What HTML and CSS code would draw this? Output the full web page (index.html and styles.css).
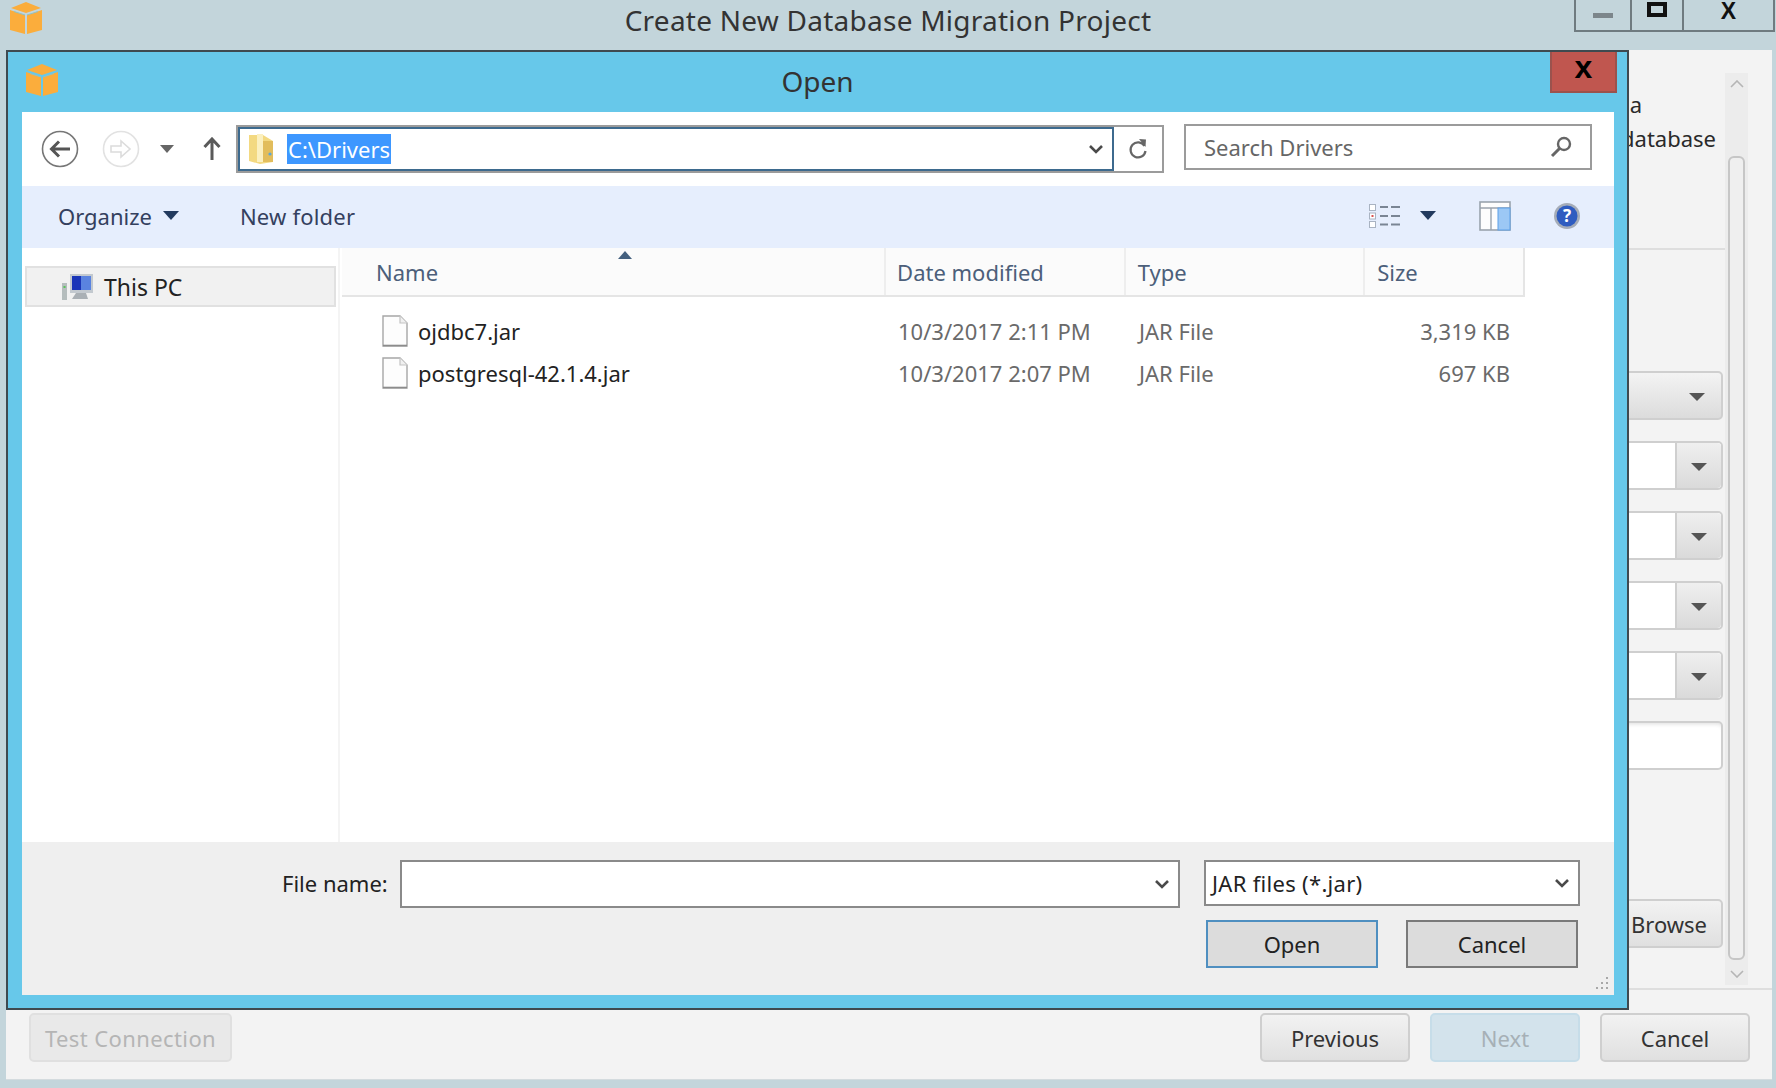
FILE: index.html
```html
<!DOCTYPE html>
<html lang="en">
<head>
    <meta charset="UTF-8">
    <meta name="viewport" content="width=device-width, initial-scale=1.0">
    <title>Create New Database Migration Project</title>
    <link rel="stylesheet" href="styles.css">
</head>
<body>
    <svg class="defs" width="0" height="0">
        <symbol id="box" viewBox="0 0 32 32">
            <path d="M16 0 L31 6 L16 11 L1 6 Z" fill="#fbad3c"/>
            <path d="M0 8 L15 13 V32 L0 28 Z" fill="#fbad3c"/>
            <path d="M32 8 L17 13 V32 L32 28 Z" fill="#fbad3c"/>
            <path d="M4 9.5 L15 13 M28 9.5 L17 13" stroke="#8fc3c8" stroke-width="1"/>
        </symbol>
        <symbol id="file" viewBox="0 0 26 32">
            <path d="M1 1 H18 L25 8 V31 H1 Z" fill="#fdfdfd" stroke="#a6a6a6" stroke-width="1.4"/>
            <path d="M18 1 V8 H25" fill="#f0f0f0" stroke="#c4c4c4" stroke-width="1.2"/>
            <path d="M1 30.5 H25" stroke="#8c8c8c" stroke-width="1.6"/>
        </symbol>
        <symbol id="combo-caret" viewBox="0 0 16 10">
            <path d="M2 2 L8 8 L14 2" fill="none" stroke="#4a4a4a" stroke-width="2.6"/>
        </symbol>
    </svg>

    <div class="window">
        <header class="titlebar">
            <svg class="app-icon"><use href="#box"/></svg>
            <div class="title">Create New Database Migration Project</div>
            <div class="win-buttons">
                <div class="win-btn win-min"><span class="min-glyph"></span></div>
                <div class="win-btn win-max"><span class="max-glyph"></span></div>
                <div class="win-btn win-close">X</div>
            </div>
        </header>

        <div class="client">
            <div class="wizard-body">
                <div class="form">
                    <div class="intro">
                        <div class="intro-a">a</div>
                        <div>database</div>
                    </div>
                    <div class="fields">
                        <div class="combo combo-full"><span class="combo-arrow"></span></div>
                        <div class="combo"><span class="combo-arrow"></span></div>
                        <div class="combo"><span class="combo-arrow"></span></div>
                        <div class="combo"><span class="combo-arrow"></span></div>
                        <div class="combo"><span class="combo-arrow"></span></div>
                        <div class="combo combo-input"></div>
                    </div>
                    <div class="browse-row">
                        <button class="btn btn-browse">Browse</button>
                    </div>
                </div>
                <div class="scrollbar">
                    <svg class="scroll-arrow" viewBox="0 0 14 8"><path d="M1 7 L7 1 L13 7" fill="none" stroke="#b5b5b5" stroke-width="1.6"/></svg>
                    <div class="scroll-thumb"></div>
                    <svg class="scroll-arrow" viewBox="0 0 14 8"><path d="M1 1 L7 7 L13 1" fill="none" stroke="#b5b5b5" stroke-width="1.6"/></svg>
                </div>
            </div>
            <footer class="wizard-footer">
                <button class="btn btn-disabled">Test Connection</button>
                <div class="footer-right">
                    <button class="btn">Previous</button>
                    <button class="btn btn-next">Next</button>
                    <button class="btn">Cancel</button>
                </div>
            </footer>
        </div>

        <!-- file dialog sits over the wizard -->
        <div class="dialog">
            <div class="dialog-title">
                <svg class="dialog-icon"><use href="#box"/></svg>
                <div class="dialog-name">Open</div>
                <div class="dialog-close">x</div>
            </div>
            <div class="dialog-inner">
                <div class="navbar">
                    <svg class="nav-circle" viewBox="0 0 38 38">
                        <circle cx="19" cy="19" r="17.5" fill="#fff" stroke="#777" stroke-width="1.6"/>
                        <path d="M29 19 H11 M18 11.5 L10.5 19 L18 26.5" fill="none" stroke="#555" stroke-width="3"/>
                    </svg>
                    <svg class="nav-circle nav-forward" viewBox="0 0 38 38">
                        <circle cx="19" cy="19" r="17.5" fill="#fff" stroke="#e2e2e2" stroke-width="1.6"/>
                        <path d="M9 16 H19 V11 L28 19 L19 27 V22 H9 Z" fill="none" stroke="#dcdcdc" stroke-width="1.6"/>
                    </svg>
                    <span class="nav-down"></span>
                    <svg class="nav-up" viewBox="0 0 18 24">
                        <path d="M9 23 V3 M1.5 10 L9 2 L16.5 10" fill="none" stroke="#5a5a5a" stroke-width="3"/>
                    </svg>
                    <div class="address">
                        <div class="address-field">
                            <svg class="folder" viewBox="0 0 26 32">
                                <path d="M1 2 H15 L25 8 V29 L12 31 L1 28 Z" fill="#f3d981"/>
                                <path d="M9 1 H15 V29 H9 Z" fill="#fbf0c0"/>
                                <path d="M15 8 H25 V29 H15 Z" fill="#e2bd5c"/>
                                <circle cx="22" cy="21" r="1.6" fill="#5aa7d8"/>
                            </svg>
                            <span class="address-text">C:\Drivers</span>
                            <svg class="caret"><use href="#combo-caret"/></svg>
                        </div>
                        <div class="address-refresh">
                            <svg class="refresh" viewBox="0 0 20 22">
                                <path d="M16.5 8 A7.5 7.5 0 1 0 17.5 13" fill="none" stroke="#666" stroke-width="2.2"/>
                                <path d="M11 1 L18 1.5 L17.5 9 Z" fill="#666"/>
                            </svg>
                        </div>
                    </div>
                    <div class="search">
                        <span class="search-text">Search Drivers</span>
                        <svg class="search-icon" viewBox="0 0 22 22">
                            <circle cx="14" cy="8" r="6" fill="none" stroke="#666" stroke-width="2.4"/>
                            <path d="M9.5 12.5 L2 20" stroke="#666" stroke-width="3"/>
                        </svg>
                    </div>
                </div>

                <div class="toolbar">
                    <span class="tool-item">Organize<span class="tool-arrow"></span></span>
                    <span class="tool-item tool-new">New folder</span>
                    <div class="tool-right">
                        <svg class="view-icon" viewBox="0 0 31 24">
                            <g fill="#fff" stroke="#a9b3c2" stroke-width="1">
                                <rect x="0.5" y="0.5" width="6" height="6"/>
                                <rect x="0.5" y="9" width="6" height="6"/>
                                <rect x="0.5" y="17.5" width="6" height="6"/>
                            </g>
                            <rect x="2.5" y="11" width="2" height="2" fill="#d9534f"/>
                            <path d="M11 3 H19 M22 3 H31 M11 12 H19 M22 12 H31 M11 20.5 H19 M22 20.5 H31" stroke="#7a8594" stroke-width="2"/>
                        </svg>
                        <span class="tool-arrow view-arrow"></span>
                        <svg class="pane-icon" viewBox="0 0 32 30">
                            <rect x="1" y="1" width="30" height="28" fill="#fdfdfd" stroke="#9aa3ad" stroke-width="1.6"/>
                            <path d="M1 7 H31 M12 7 V29" stroke="#9aa3ad" stroke-width="1.4"/>
                            <rect x="19" y="7" width="12" height="22" fill="#9cc8f5" stroke="#5da0e8" stroke-width="1"/>
                        </svg>
                        <svg class="help-icon" viewBox="0 0 28 28">
                            <circle cx="14" cy="14" r="13" fill="#a5acb8"/>
                            <circle cx="14" cy="14" r="10.5" fill="#2f5cc0"/>
                            <text x="14" y="20" text-anchor="middle" class="help-mark">?</text>
                        </svg>
                    </div>
                </div>

                <div class="browser">
                    <nav class="tree">
                        <div class="tree-item">
                            <svg class="pc-icon" viewBox="0 0 32 28">
                                <rect x="0" y="10" width="5" height="17" fill="#b5bdbd"/>
                                <rect x="1.5" y="13" width="2" height="2" fill="#58c45a"/>
                                <rect x="8" y="1" width="23" height="19" fill="#c3c9cf"/>
                                <rect x="10" y="3" width="19" height="14" fill="#1a35b8"/>
                                <rect x="19" y="3" width="10" height="14" fill="#5a83e0"/>
                                <path d="M14 20 H24 L26 26 H10 Z" fill="#aab0b5"/>
                            </svg>
                            <span>This PC</span>
                        </div>
                    </nav>
                    <div class="list">
                        <div class="list-head">
                            <span class="sort-arrow"></span>
                            <div class="col-name">Name</div>
                            <div class="col-date">Date modified</div>
                            <div class="col-type">Type</div>
                            <div class="col-size">Size</div>
                        </div>
                        <div class="rows">
                            <div class="row">
                                <div class="col-name cell-name"><svg class="file-icon"><use href="#file"/></svg>ojdbc7.jar</div>
                                <div class="col-date cell-muted">10/3/2017 2:11 PM</div>
                                <div class="col-type cell-muted">JAR File</div>
                                <div class="col-size cell-muted cell-right">3,319 KB</div>
                            </div>
                            <div class="row">
                                <div class="col-name cell-name"><svg class="file-icon"><use href="#file"/></svg>postgresql-42.1.4.jar</div>
                                <div class="col-date cell-muted">10/3/2017 2:07 PM</div>
                                <div class="col-type cell-muted">JAR File</div>
                                <div class="col-size cell-muted cell-right">697 KB</div>
                            </div>
                        </div>
                    </div>
                </div>

                <div class="dialog-bottom">
                    <div class="name-row">
                        <label class="name-label">File name:</label>
                        <div class="name-input"><svg class="caret"><use href="#combo-caret"/></svg></div>
                        <div class="type-select">JAR files (*.jar)<svg class="caret"><use href="#combo-caret"/></svg></div>
                    </div>
                    <div class="action-row">
                        <button class="win-action win-action-default">Open</button>
                        <button class="win-action">Cancel</button>
                    </div>
                    <svg class="grip" viewBox="0 0 16 16">
                        <g fill="#a8a8a8">
                            <rect x="13" y="1" width="2" height="2"/>
                            <rect x="13" y="6" width="2" height="2"/><rect x="8" y="6" width="2" height="2"/>
                            <rect x="13" y="11" width="2" height="2"/><rect x="8" y="11" width="2" height="2"/><rect x="3" y="11" width="2" height="2"/>
                        </g>
                    </svg>
                </div>
            </div>
        </div>
    </div>
</body>
</html>
```

FILE: styles.css
```css
* {
    box-sizing: border-box;
}
body {
    margin: 0;
    font-family: "Noto Sans", "Open Sans", sans-serif;
    font-size: 22px;
    color: #2a2a2a;
    background: #c3d5db;
    overflow: hidden;
}
button {
    font-family: inherit;
    font-size: 22px;
}
.defs {
    position: absolute;
}
.window {
    position: relative;
    width: 1776px;
    height: 1088px;
    display: flex;
    flex-direction: column;
}

/* main window title */
.titlebar {
    height: 50px;
    display: grid;
    grid-template-columns: 1fr auto 1fr;
}
.app-icon {
    width: 32px;
    height: 32px;
    margin: 2px 0 0 10px;
}
.title {
    font-size: 28px;
    letter-spacing: 0.25px;
    line-height: 40px;
    color: #333;
}
.win-buttons {
    justify-self: end;
    display: flex;
    height: 32px;
    margin-right: 1px;
    border: 2px solid #6f7b80;
    border-top: none;
}
.win-btn {
    display: flex;
    justify-content: center;
}
.win-min {
    width: 56px;
    border-right: 2px solid #6f7b80;
}
.win-max {
    width: 52px;
    border-right: 2px solid #6f7b80;
}
.win-close {
    width: 89px;
    font-weight: 700;
    font-size: 23px;
    line-height: 22px;
    color: #111;
    font-family: "Liberation Sans", sans-serif;
}
.min-glyph {
    width: 20px;
    height: 5px;
    margin-top: 13px;
    background: #7c868b;
}
.max-glyph {
    width: 20px;
    height: 15px;
    margin-top: 2px;
    border: 4px solid #111;
}

/* wizard behind the dialog */
.client {
    flex: 1;
    margin: 0 4px 8px 6px;
    background: #f3f3f3;
    display: flex;
    flex-direction: column;
    border-bottom: 1px solid #d4dbde;
}
.wizard-body {
    height: 940px;
    display: flex;
    border-bottom: 2px solid #dedede;
}
.form {
    flex: 1;
    display: flex;
    flex-direction: column;
    align-items: flex-end;
}
.intro {
    width: 100%;
    height: 200px;
    padding-top: 37px;
    display: flex;
    flex-direction: column;
    align-items: flex-end;
    padding-right: 9px;
    line-height: 34px;
    border-bottom: 2px solid #dedede;
}
.intro-a {
    margin-right: 74px;
}
.fields {
    margin-top: 121px;
    width: 400px;
    display: flex;
    flex-direction: column;
    gap: 21px;
    margin-right: 2px;
}
.combo {
    height: 49px;
    background: #fff;
    border: 2px solid #cfcfcf;
    border-radius: 5px;
    display: flex;
    justify-content: flex-end;
}
.combo-full {
    background: linear-gradient(#f3f3f3, #dcdcdc);
}
.combo-full .combo-arrow {
    background: none;
    border-left: none;
}
.combo-input {
    box-shadow: inset 0 4px 4px -3px #ddd;
}
.combo-arrow {
    width: 46px;
    background: linear-gradient(#efefef, #dadada);
    border-left: 2px solid #cfcfcf;
    border-radius: 0 4px 4px 0;
    position: relative;
}
.combo-arrow::after {
    content: "";
    position: absolute;
    left: 14px;
    top: 20px;
    border: 8px solid transparent;
    border-top: 8px solid #555;
    border-bottom: none;
}
.browse-row {
    margin-top: 129px;
    margin-right: 2px;
}
.btn {
    height: 49px;
    min-width: 150px;
    padding: 0 20px;
    color: #333;
    background: linear-gradient(#f2f2f2, #e0e0e0);
    border: 2px solid #cfcfcf;
    border-radius: 5px;
}
.btn-browse {
    width: 200px;
    height: 49px;
    padding: 0 14px 0 0;
    text-align: right;
}
.btn-next {
    background: #d3e3ec;
    border-color: #c6dde9;
    color: #a6b0b6;
}
.btn-disabled {
    width: 203px;
    padding: 0;
    letter-spacing: 0.4px;
    background: #e9e9e9;
    border-color: #e0e0e0;
    color: #b5b5b5;
}
.scrollbar {
    width: 23px;
    margin: 23px 24px 3px 0;
    background: #ececec;
    display: flex;
    flex-direction: column;
    align-items: center;
    gap: 0;
}
.scroll-arrow {
    width: 14px;
    height: 8px;
    margin: 7px 0;
    flex: none;
}
.scroll-thumb {
    flex: 1;
    width: 17px;
    margin: 61px 0 3px;
    border: 2px solid #c6c6c6;
    border-radius: 6px;
    background: #efefef;
}
.wizard-footer {
    flex: 1;
    display: flex;
    justify-content: space-between;
    padding: 23px 22px 0 23px;
}
.footer-right {
    display: flex;
    gap: 20px;
}

/* open file dialog */
.dialog {
    position: absolute;
    left: 6px;
    top: 50px;
    width: 1623px;
    height: 960px;
    background: #67c8ea;
    border: 2px solid #3f4a50;
    display: flex;
    flex-direction: column;
}
.dialog-title {
    height: 60px;
    flex: none;
    position: relative;
    display: flex;
    justify-content: center;
    padding-top: 10px;
}
.dialog-icon {
    position: absolute;
    left: 18px;
    top: 12px;
    width: 32px;
    height: 32px;
}
.dialog-name {
    font-size: 28px;
    color: #333;
}
.dialog-close {
    position: absolute;
    right: 10px;
    top: 0;
    width: 67px;
    height: 41px;
    background: #c0564f;
    border: 2px solid #9b524d;
    border-top: none;
    color: #000;
    font-family: "Liberation Sans", sans-serif;
    font-weight: 700;
    font-size: 32px;
    line-height: 30px;
    text-align: center;
}
.dialog-inner {
    flex: none;
    width: 1592px;
    height: 883px;
    margin-left: 14px;
    background: #fff;
    display: flex;
    flex-direction: column;
}
.navbar {
    height: 74px;
    flex: none;
    display: flex;
    align-items: center;
    padding-left: 19px;
}
.nav-circle {
    width: 38px;
    height: 38px;
}
.nav-forward {
    margin-left: 23px;
}
.nav-down {
    margin-left: 20px;
    border: 7px solid transparent;
    border-top: 8px solid #666;
    border-bottom: none;
}
.nav-up {
    width: 18px;
    height: 24px;
    margin-left: 29px;
}
.address {
    margin-left: 15px;
    width: 928px;
    height: 48px;
    display: flex;
    border: 2px solid #9b9b9b;
}
.address-field {
    flex: 1;
    display: flex;
    align-items: center;
    border: 2px solid #3d6a8e;
    padding: 0 8px 0 8px;
}
.folder {
    width: 26px;
    height: 32px;
}
.address-text {
    margin-left: 13px;
    background: #3d97ff;
    color: #fff;
    line-height: 30px;
    padding: 0 1px;
}
.caret {
    width: 16px;
    height: 10px;
    margin-left: auto;
}
.address-refresh {
    width: 48px;
    display: flex;
    align-items: center;
    justify-content: center;
}
.refresh {
    width: 20px;
    height: 22px;
}
.search {
    margin: 0 0 4px 20px;
    width: 408px;
    height: 46px;
    display: flex;
    align-items: center;
    justify-content: space-between;
    border: 2px solid #9b9b9b;
    padding: 0 18px;
    color: #666;
}
.search-icon {
    width: 22px;
    height: 22px;
}
.toolbar {
    height: 62px;
    flex: none;
    display: flex;
    align-items: center;
    background: #e6eefd;
    color: #34405e;
    padding: 0 0 3px 36px;
}
.tool-item {
    display: flex;
    align-items: center;
}
.tool-arrow {
    margin-left: 11px;
    border: 8px solid transparent;
    border-top: 9px solid #223a5e;
    border-bottom: none;
}
.tool-new {
    margin-left: 61px;
    letter-spacing: 0.2px;
}
.tool-right {
    margin-left: auto;
    display: flex;
    align-items: center;
    padding-right: 33px;
}
.view-icon {
    width: 31px;
    height: 24px;
}
.view-arrow {
    margin-left: 20px;
}
.pane-icon {
    width: 32px;
    height: 30px;
    margin-left: 43px;
}
.help-icon {
    width: 28px;
    height: 28px;
    margin-left: 42px;
}
.help-mark {
    font-size: 17px;
    font-weight: 700;
    fill: #fff;
}
.browser {
    height: 594px;
    flex: none;
    display: flex;
}
.tree {
    width: 318px;
    flex: none;
    padding: 18px 0 0 3px;
    border-right: 2px solid #f4f4f4;
    margin-right: 2px;
}
.tree-item {
    width: 311px;
    height: 41px;
    display: flex;
    align-items: center;
    background: #f1f1f1;
    border: 2px solid #e1e1e1;
    padding-left: 35px;
    gap: 10px;
    font-size: 23px;
    color: #222;
}
.pc-icon {
    width: 32px;
    height: 28px;
}
.list {
    flex: 1;
}
.list-head {
    position: relative;
    width: 1183px;
    height: 49px;
    display: flex;
    align-items: center;
    background: #fbfbfb;
    border-bottom: 2px solid #e5e5e5;
    border-right: 2px solid #e5e5e5;
    color: #4c5f7a;
}
.sort-arrow {
    position: absolute;
    left: 276px;
    top: 3px;
    border: 7px solid transparent;
    border-bottom: 8px solid #44607f;
    border-top: none;
}
.list-head > div {
    align-self: stretch;
    display: flex;
    align-items: center;
    border-right: 2px solid #eeeeee;
}
.list-head > .col-size {
    border-right: none;
}
.col-name {
    width: 545px;
    padding-left: 34px;
}
.col-date {
    width: 240px;
    padding-left: 11px;
}
.col-type {
    width: 240px;
    padding-left: 12px;
}
.col-size {
    width: 158px;
    padding-left: 12px;
}
.rows {
    padding-top: 13px;
}
.row {
    height: 42px;
    display: flex;
    align-items: center;
}
.cell-name {
    display: flex;
    align-items: center;
    padding-left: 40px;
    color: #222;
}
.file-icon {
    width: 26px;
    height: 32px;
    margin-right: 10px;
}
.cell-muted {
    color: #6a6a6a;
}
.cell-right {
    text-align: right;
    padding-right: 15px;
}
.dialog-bottom {
    flex: 1;
    position: relative;
    background: #efefef;
    padding-top: 18px;
}
.name-row {
    display: flex;
    align-items: flex-start;
    padding-left: 260px;
    color: #222;
}
.name-label {
    width: 108px;
    line-height: 46px;
    margin-right: 10px;
}
.name-input {
    width: 780px;
    height: 48px;
    background: #fff;
    border: 2px solid #8a8a8a;
    display: flex;
    align-items: center;
    padding-right: 8px;
}
.type-select {
    margin-left: 24px;
    width: 376px;
    height: 46px;
    background: #fff;
    border: 2px solid #8a8a8a;
    display: flex;
    align-items: center;
    padding: 0 8px 0 6px;
    letter-spacing: 0.3px;
}
.action-row {
    display: flex;
    gap: 28px;
    margin: 12px 0 0 1184px;
}
.win-action {
    width: 172px;
    height: 48px;
    background: #dcdcdc;
    border: 2px solid #7a7a7a;
    color: #222;
}
.win-action-default {
    border-color: #4f8fc0;
}
.grip {
    position: absolute;
    right: 5px;
    bottom: 3px;
    width: 16px;
    height: 16px;
}
```
